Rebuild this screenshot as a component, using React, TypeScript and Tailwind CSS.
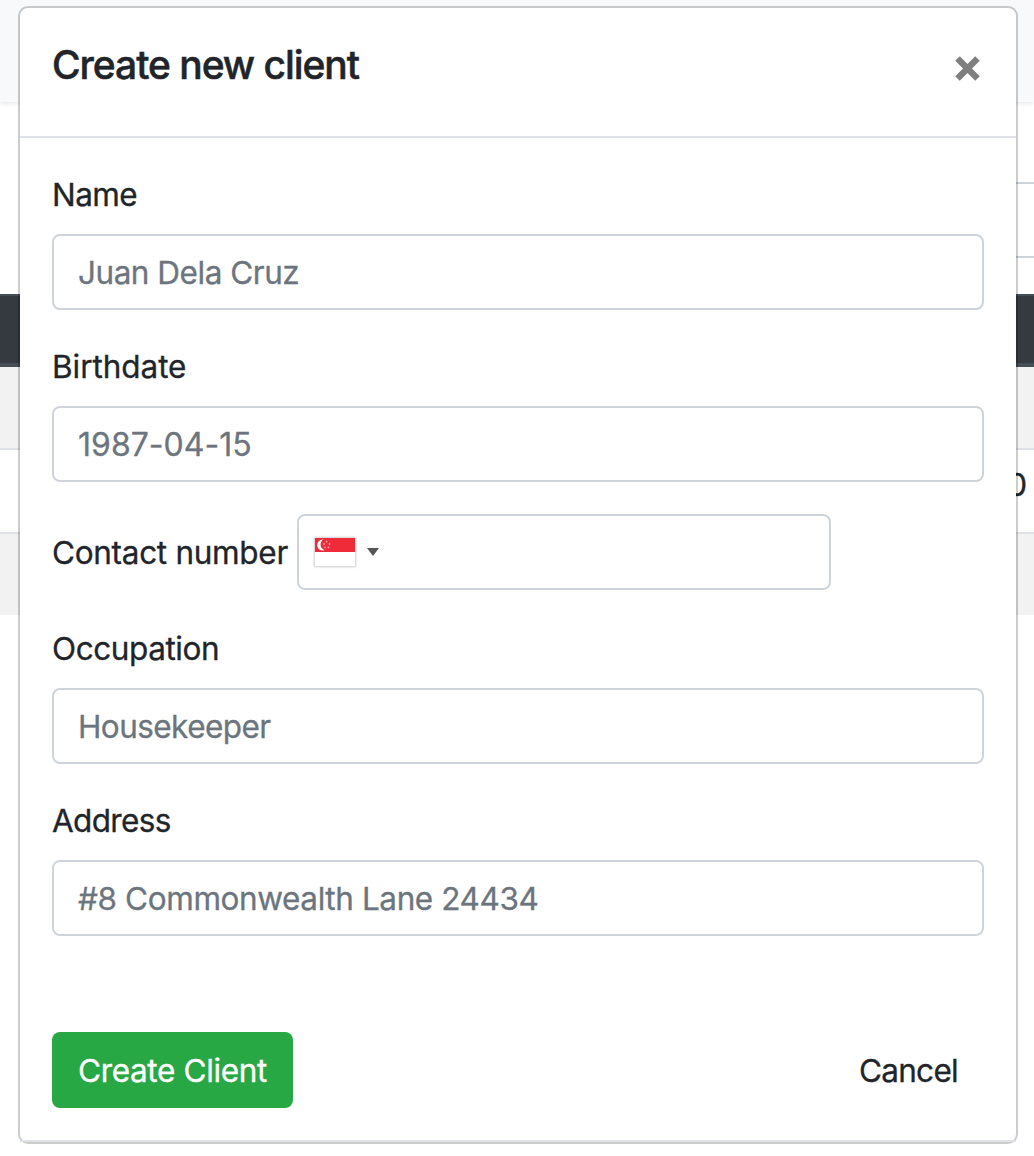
import React from 'react';

function Flag() {
  return (
    <svg width="40" height="28" viewBox="0 0 40 28" className="shrink-0 shadow-[0_0_2px_1px_rgba(0,0,0,0.2)]">
      <rect width="40" height="28" fill="#fff" />
      <rect width="40" height="14" fill="#ef2b3a" />
      <path d="M8.2 1.6a5.5 5.5 0 1 0 1.4 10.6a6 6 0 0 1 -1.4 -10.6z" fill="#fff" />
      <g fill="#f9a0a8">
        <circle cx="11.6" cy="3.6" r="0.9" />
        <circle cx="9" cy="6" r="0.9" />
        <circle cx="14.5" cy="6" r="0.9" />
        <circle cx="10" cy="9.4" r="0.9" />
        <circle cx="13.5" cy="9.4" r="0.9" />
      </g>
    </svg>
  );
}

interface FieldProps {
  label: string;
  labelClass: string;
  placeholder: string;
  inputClass: string;
}

function Field({ label, labelClass, placeholder, inputClass }: FieldProps) {
  return (
    <label className="block">
      <span className={`block h-12 pt-px ${labelClass}`}>{label}</span>
      <input
        placeholder={placeholder}
        className={`mt-4 block h-[76px] w-full rounded-lg border-2 border-[#ced4da] bg-white px-6 pt-px placeholder:text-[#6c757d] placeholder:opacity-100 ${inputClass}`}
      />
    </label>
  );
}

function Backdrop() {
  return (
    <div className="flex h-full flex-col">
      <div className="h-[102px] shrink-0 bg-[#f8f9fb] shadow-[0_2px_4px_rgba(0,0,0,0.08)]" />
      <div className="mt-20 ml-auto h-[76px] w-24 shrink-0 border-y-2 border-[#ced4da]" />
      <div className="mt-9 h-[73px] shrink-0 border-t-2 border-b-4 border-[#454d55] bg-[#343a40]" />
      <div className="h-[81px] shrink-0 bg-[#f2f2f2]" />
      <div className="flex h-[84px] shrink-0 items-center justify-end border-t-2 border-[#dee2e6] pr-[7px] pb-3">
        0
      </div>
      <div className="h-[83px] shrink-0 border-t-2 border-[#dee2e6] bg-[#f2f2f2]" />
    </div>
  );
}

export default function App() {
  return (
    <div className="relative h-[1156px] w-[1034px] overflow-hidden bg-white font-['Inter',sans-serif] text-[31.5px] leading-[48px] text-[#212529] [-webkit-text-stroke-width:0.3px]">
      <Backdrop />
      <div className="absolute top-1.5 left-[18px] flex h-[1138px] w-[1000px] flex-col rounded-[10px] border-2 border-black/20 bg-white bg-clip-padding">
        <header className="flex h-[130px] shrink-0 items-start justify-between border-b-2 border-[#dee2e6] px-8 pt-8">
          <h5 className="text-[39px] leading-[50px] font-medium tracking-[-1.05px] [-webkit-text-stroke-width:0.5px]">Create new client</h5>
          <button aria-label="Close" className="mt-4 mr-1">
            <svg width="25" height="25" viewBox="0 0 25 25" className="block">
              <path d="M2.5 2.5L22.5 22.5M22.5 2.5L2.5 22.5" stroke="#7f7f7f" strokeWidth="6.4" />
            </svg>
          </button>
        </header>
        <main className="flex flex-col px-8 pt-8">
          <Field label="Name" labelClass="tracking-[-0.6px]" placeholder="Juan Dela Cruz" inputClass="tracking-[-0.48px]" />
          <div className="h-8" />
          <Field label="Birthdate" labelClass="tracking-[-0.05px]" placeholder="1987-04-15" inputClass="text-[32px] tracking-[0.02px]" />
          <div className="mt-8 flex items-center">
            <span className="w-[245px] whitespace-nowrap pt-0.5 tracking-[-0.3px]">Contact number</span>
            <div className="flex h-[76px] w-[534px] items-center rounded-lg border-2 border-[#ced4da] pl-4">
              <Flag />
              <svg width="12" height="8" viewBox="0 0 12 8" className="ml-3">
                <path d="M0 0H12L6 8Z" fill="#555" />
              </svg>
            </div>
          </div>
          <div className="h-[34px]" />
          <Field label="Occupation" labelClass="tracking-[-0.43px]" placeholder="Housekeeper" inputClass="tracking-[-0.56px]" />
          <div className="h-8" />
          <Field label="Address" labelClass="tracking-[-0.65px]" placeholder="#8 Commonwealth Lane 24434" inputClass="tracking-[-0.4px]" />
        </main>
        <footer className="mt-24 flex items-center justify-between px-8">
          <button className="h-[76px] w-[241px] whitespace-nowrap rounded-lg bg-[#28a745] pt-0.5 tracking-[-0.35px] text-white">Create Client</button>
          <button className="h-[76px] pr-[26px] pl-[25px] pt-0.5 tracking-[-0.7px]">Cancel</button>
        </footer>
        <div className="mt-auto h-0.5 shrink-0 bg-[#dee2e6]" />
      </div>
    </div>
  );
}
